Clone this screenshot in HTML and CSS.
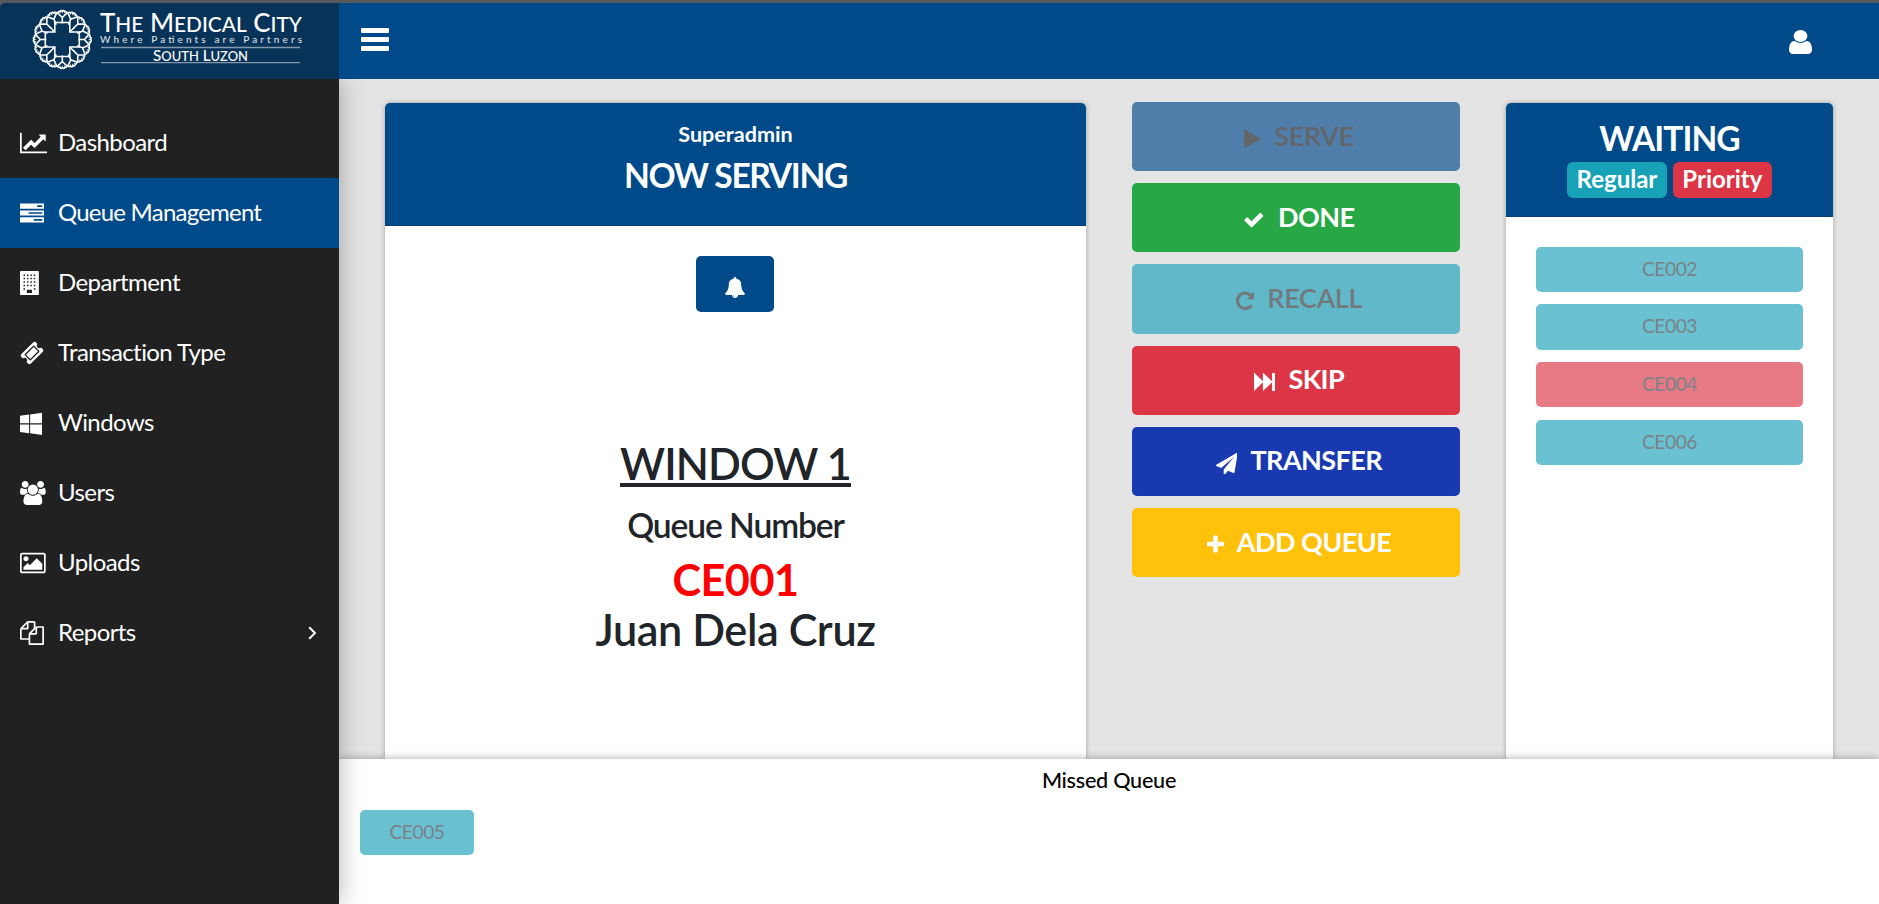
FILE: index.html
```html
<!DOCTYPE html>
<html lang="en">
<head>
<meta charset="utf-8">
<title>Queue Management</title>
<link rel="stylesheet" href="styles.css">
</head>
<body>
<div class="app">
  <header class="topbar">
    <div class="brand">
      <svg class="logo" width="339" height="76" viewBox="0 3 339 76">
        <defs>
          <g id="petal"><path d="M0-16V-22L-4.600-26.300M0-22L4.600-26.300M-5-25.500C-5-27.500-3.500-28.500-2.500-27.500C-2-29.300-.6-29.300 0-28C.6-29.300 2-29.300 2.500-27.500C3.500-28.500 5-27.500 5-25.500"/></g>
        </defs>
        <g transform="translate(62.300 39.500)" fill="none" stroke="#fff" stroke-width="1.600">
          <path d="M-7.500-17H7.500V-7.500H17V7.500H7.500V17H-7.500V7.500H-17V-7.500H-7.500Z"/>
          <path d="M-7.500-7.500L-12-12M7.500-7.500L12-12M7.500 7.500L12 12M-7.500 7.500L-12 12"/>
          <use href="#petal"/><use href="#petal" transform="rotate(22.500)"/><use href="#petal" transform="rotate(45)"/><use href="#petal" transform="rotate(67.500)"/>
          <use href="#petal" transform="rotate(90)"/><use href="#petal" transform="rotate(112.500)"/><use href="#petal" transform="rotate(135)"/><use href="#petal" transform="rotate(157.500)"/>
          <use href="#petal" transform="rotate(180)"/><use href="#petal" transform="rotate(202.500)"/><use href="#petal" transform="rotate(225)"/><use href="#petal" transform="rotate(247.500)"/>
          <use href="#petal" transform="rotate(270)"/><use href="#petal" transform="rotate(292.500)"/><use href="#petal" transform="rotate(315)"/><use href="#petal" transform="rotate(337.500)"/>
        </g>
        <g class="logo-text">
          <text class="logo-name" x="100" y="32" font-size="26" textLength="202" lengthAdjust="spacingAndGlyphs">T<tspan font-size="21">HE</tspan> M<tspan font-size="21">EDICAL</tspan> C<tspan font-size="21">ITY</tspan></text>
          <text class="logo-tag" x="100" y="43" font-size="10" textLength="202">Where Patients are Partners</text>
          <text class="logo-name" x="153" y="60.500" font-size="15" textLength="95" lengthAdjust="spacingAndGlyphs">S<tspan font-size="12.800">OUTH</tspan> L<tspan font-size="12.800">UZON</tspan></text>
        </g>
        <path d="M101 47.500H300M101 62.700H300" stroke="#8499ab" stroke-width="1.300"/>
      </svg>
    </div>
    <div class="topbar-main">
      <svg width="28" height="23" viewBox="0 0 28 23" fill="#fff"><rect width="28" height="5" rx="1"/><rect y="9" width="28" height="5" rx="1"/><rect y="18" width="28" height="5" rx="1"/></svg>
      <svg class="user" width="23" height="24" viewBox="256 128 1280 1536" preserveAspectRatio="none" fill="#fff"><path d="M1536 1399q0 109-62.500 187t-150.500 78h-854q-88 0-150.500-78t-62.500-187q0-85 8.500-160.500t31.500-152 58.500-131 94-89 134.500-34.500q131 128 313 128t313-128q76 0 134.500 34.500t94 89 58.500 131 31.500 152 8.500 160.500zm-256-887q0 159-112.500 271.500t-271.500 112.500-271.500-112.500-112.500-271.500 112.500-271.500 271.500-112.500 271.500 112.500 112.500 271.500z"/></svg>
    </div>
  </header>
  <div class="body">
    <nav class="sidebar">
      <a class="nav-item"><span class="nav-icon"><svg viewBox="0 0 2048 1792"><path d="M2048 1536v128h-2048v-1536h128v1408h1920zm-128-1248v435q0 21-19.500 29.500t-35.500-7.500l-121-121-633 633q-10 10-23 10t-23-10l-233-233-416 416-192-192 585-585q10-10 23-10t23 10l233 233 464-464-121-121q-16-16-7.500-35.500t29.500-19.500h435q14 0 23 9t9 23z"/></svg></span><span class="label">Dashboard</span></a>
      <a class="nav-item active"><span class="nav-icon"><svg viewBox="0 0 1792 1792"><path fill-rule="evenodd" d="M0 192h1792v384h-1792zM1280 320v128h384v-128zM0 704h1792v384h-1792zM640 832v128h1024v-128zM0 1216h1792v384h-1792zM1024 1344v128h640v-128z"/></svg></span><span class="label">Queue Management</span></a>
      <a class="nav-item"><span class="nav-icon"><svg viewBox="0 0 1408 1792"><path d="M64 0h1280q64 0 64 64v1664q0 64-64 64h-1280q-64 0-64-64v-1664q0-64 64-64z"/><path fill="none" stroke="#212121" stroke-width="110" stroke-dasharray="110 146" d="M265 310h900M265 566h900M265 822h900M265 1078h900"/><path fill="#212121" d="M256 1290h120v110h-120zM1034 1290h120v110h-120zM512 1400h384v240h-384z"/></svg></span><span class="label">Department</span></a>
      <a class="nav-item"><span class="nav-icon"><svg viewBox="0 0 1792 1792"><path d="M1024 452l316 316-572 572-316-316zm-211 979l618-618q19-19 19-45t-19-45l-362-362q-18-18-45-18t-45 18l-618 618q-19 19-19 45t19 45l362 362q18 18 45 18t45-18zm889-637l-907 908q-37 37-90.500 37t-90.500-37l-126-126q56-56 56-136t-56-136-136-56-136 56l-125-126q-37-37-37-90.500t37-90.500l907-906q37-37 90.500-37t90.500 37l125 125q-56 56-56 136t56 136 136 56 136-56l126 125q37 37 37 90.500t-37 90.500z"/></svg></span><span class="label">Transaction Type</span></a>
      <a class="nav-item"><span class="nav-icon"><svg viewBox="64 0 1664 1792"><path d="M746 1006v651l-682-94v-557h682zm0-743v659h-682v-565zm982 743v786l-907-125v-661h907zm0-878v794h-907v-669z"/></svg></span><span class="label">Windows</span></a>
      <a class="nav-item"><span class="nav-icon"><svg viewBox="64 0 1920 1792"><path d="M657 896q-162 5-265 128h-134q-82 0-138-40.500t-56-118.500q0-353 124-353 6 0 43.500 21t97.500 42.500 119 21.500q67 0 133-23-5 37-5 66 0 139 81 256zm1071 637q0 120-73 189.500t-194 69.500h-874q-121 0-194-69.500t-73-189.500q0-53 3.500-103.500t14-109 26.500-108.500 43-97.500 62-81 85.500-53.500 111.500-20q10 0 43 21.500t73 48 107 48 135 21.500 135-21.500 107-48 73-48 43-21.500q61 0 111.500 20t85.500 53.500 62 81 43 97.500 26.500 108.500 14 109 3.500 103.500zm-1024-1277q0 106-75 181t-181 75-181-75-75-181 75-181 181-75 181 75 75 181zm704 384q0 159-112.500 271.500t-271.500 112.500-271.500-112.500-112.500-271.500 112.500-271.500 271.500-112.500 271.500 112.500 112.500 271.500zm576 225q0 78-56 118.500t-138 40.500h-134q-103-123-265-128 81-117 81-256 0-29-5-66 66 23 133 23 59 0 119-21.500t97.500-42.500 43.500-21q124 0 124 353zm-128-609q0 106-75 181t-181 75-181-75-75-181 75-181 181-75 181 75 75 181z"/></svg></span><span class="label">Users</span></a>
      <a class="nav-item"><span class="nav-icon"><svg viewBox="-64 0 1920 1792"><path d="M576 576q0 80-56 136t-136 56-136-56-56-136 56-136 136-56 136 56 56 136zm1024 384v448h-1408v-192l320-320 160 160 512-512zm96-704h-1600q-13 0-22.500 9.500t-9.500 22.500v1216q0 13 9.500 22.500t22.500 9.500h1600q13 0 22.500-9.500t9.500-22.500v-1216q0-13-9.500-22.500t-22.500-9.500zm160 32v1216q0 66-47 113t-113 47h-1600q-66 0-113-47t-47-113v-1216q0-66 47-113t113-47h1600q66 0 113 47t47 113z"/></svg></span><span class="label">Uploads</span></a>
      <a class="nav-item"><span class="nav-icon"><svg viewBox="0 0 1792 1792"><path d="M1696 384q40 0 68 28t28 68v1216q0 40-28 68t-68 28h-960q-40 0-68-28t-28-68v-288h-544q-40 0-68-28t-28-68v-672q0-40 20-88t48-76l408-408q28-28 76-48t88-20h416q40 0 68 28t28 68v328q68-40 128-40h416zm-544 213l-299 299h299v-299zm-640-384l-299 299h299v-299zm196 647l316-316v-416h-384v416q0 40-28 68t-68 28h-416v640h512v-256q0-40 20-88t48-76zm956 804v-1152h-384v416q0 40-28 68t-68 28h-416v640h896z"/></svg></span><span class="label">Reports</span><svg class="chevron" width="9" height="14" viewBox="0 0 9 14"><path d="M1.200 1.200L7 7L1.200 12.800" fill="none" stroke="#fff" stroke-width="2"/></svg></a>
    </nav>
    <div class="content">
      <main class="board">
        <section class="card serving">
          <div class="card-head">
            <div class="who">Superadmin</div>
            <div class="title">NOW SERVING</div>
          </div>
          <div class="serving-body">
            <button class="bell"><svg width="20" height="21" viewBox="64 0 1664 1792" preserveAspectRatio="none" fill="#fff"><path d="M912 1696q0-16-16-16-59 0-101.500-42.500t-42.500-101.500q0-16-16-16t-16 16q0 73 51.500 124.500t124.500 51.500q16 0 16-16zm816-288q0 52-38 90t-90 38h-448q0 106-75 181t-181 75-181-75-75-181h-448q-52 0-90-38t-38-90q50-42 91-88t85-119.500 74.500-158.500 50-206 19.500-260q0-152 117-282.500t307-158.500q-8-19-8-39 0-40 28-68t68-28 68 28 28 68q0 20-8 39 190 28 307 158.500t117 282.500q0 139 19.500 260t50 206 74.500 158.500 85 119.500 91 88z"/></svg></button>
            <div class="window-name">WINDOW 1</div>
            <div class="queue-label">Queue Number</div>
            <div class="queue-no">CE001</div>
            <div class="customer">Juan Dela Cruz</div>
          </div>
        </section>
        <section class="actions">
          <button class="act serve off"><svg viewBox="192 0 1408 1792"><path d="M1576 927l-1328 738q-23 13-39.500 3t-16.500-36v-1472q0-26 16.500-36t39.500 3l1328 738q23 13 23 31t-23 31z"/></svg><span>SERVE</span></button>
          <button class="act done"><svg viewBox="0 0 1792 1792"><path d="M1671 566q0 40-28 68l-724 724-136 136q-28 28-68 28t-68-28l-136-136-362-362q-28-28-28-68t28-68l136-136q28-28 68-28t68 28l294 295 656-657q28-28 68-28t68 28l136 136q28 28 28 68z"/></svg><span>DONE</span></button>
          <button class="act recall off"><svg viewBox="128 0 1536 1792"><path d="M1664 256v448q0 26-19 45t-45 19h-448q-42 0-59-40-17-39 14-69l138-138q-148-137-349-137-104 0-198.500 40.500t-163.500 109.500-109.500 163.500-40.500 198.500 40.500 198.500 109.500 163.500 163.500 109.500 198.500 40.500q119 0 225-52t179-147q7-10 23-12 15 0 25 9l137 138q9 8 9.500 20.500t-7.500 22.500q-109 132-264 204.500t-327 72.500q-156 0-298-61t-245-164-164-245-61-298 61-298 164-245 245-164 298-61q147 0 284.500 55.500t244.500 156.500l130-129q29-31 70-14 39 17 39 59z"/></svg><span>RECALL</span></button>
          <button class="act skip"><svg viewBox="0 0 1792 1792"><path d="M0 130L740 850V130L1500 850V160h280v1500h-280V942L740 1660V942L0 1660Z"/></svg><span>SKIP</span></button>
          <button class="act transfer"><svg viewBox="0 0 1792 1792"><path d="M1764 11q33 24 27 64l-256 1536q-5 29-32 45-14 8-31 8-11 0-24-5l-453-185-242 295q-18 23-49 23-13 0-22-4-19-7-30.500-23.500t-11.500-36.500v-349l864-1059-1069 925-395-162q-37-14-40-55-2-40 32-59l1664-960q15-9 32-9 20 0 36 11z"/></svg><span>TRANSFER</span></button>
          <button class="act add"><svg viewBox="192 0 1408 1792"><path d="M1600 736v192q0 40-28 68t-68 28h-416v416q0 40-28 68t-68 28h-192q-40 0-68-28t-28-68v-416h-416q-40 0-68-28t-28-68v-192q0-40 28-68t68-28h416v-416q0-40 28-68t68-28h192q40 0 68 28t28 68v416h416q40 0 68 28t28 68z"/></svg><span>ADD QUEUE</span></button>
        </section>
        <section class="card waiting">
          <div class="card-head">
            <div class="title">WAITING</div>
            <div class="badges"><span class="badge regular">Regular</span><span class="badge priority">Priority</span></div>
          </div>
          <div class="waiting-list">
            <div class="ticket">CE002</div>
            <div class="ticket">CE003</div>
            <div class="ticket urgent">CE004</div>
            <div class="ticket">CE006</div>
          </div>
        </section>
      </main>
      <footer class="missed">
        <div class="missed-title">Missed Queue</div>
        <div class="missed-list"><div class="ticket">CE005</div></div>
      </footer>
    </div>
  </div>
</div>
</body>
</html>
```
FILE: styles.css
```css
* { box-sizing: border-box; }
body { margin: 0; font-family: Lato, sans-serif; color: #212529; background: #58595b; }
button { border: 0; font-family: inherit; }
svg { display: block; flex: none; }

.app { display: flex; flex-direction: column; width: 1879px; height: 904px; padding-top: 3px; overflow: hidden; }
.topbar { position: relative; z-index: 3; display: flex; height: 76px; flex: none; }
.brand { width: 339px; background: #083358; border-top-left-radius: 5px; }
.logo-text { fill: #fff; font-family: Lato, sans-serif; }
.logo-name { font-weight: 500; }
.logo-tag { font-weight: 500; opacity: .85; }
.topbar-main { flex: 1; display: flex; justify-content: space-between; align-items: flex-start; padding: 25px 67px 0 22px; background: #004a89; }
.user { margin-top: 2px; }

.body { flex: 1; display: flex; min-height: 0; }
.sidebar { width: 339px; flex: none; padding-top: 29px; background: #212121; box-shadow: 0 0 24px rgba(0, 0, 0, .3); z-index: 2; }
.nav-item { display: flex; align-items: center; height: 70px; padding: 0 22px 0 20px; color: #fff; font-size: 24px; line-height: 36px; white-space: nowrap; }
.nav-item.active { background: #004a89; }
.label { margin-top: -3px; letter-spacing: -.58px; }
.active .label { letter-spacing: -.78px; }
.nav-icon { width: 38px; flex: none; }
.nav-icon svg { height: 24px; fill: #fff; }
.chevron { margin-left: auto; }

.content { flex: 1; display: flex; flex-direction: column; background: #e4e4e4; }
.board { flex: 1; display: flex; gap: 46px; padding: 23px 46px 0; min-height: 0; }
.card { margin-top: 1px; background: #fff; border-radius: 5px 5px 0 0; box-shadow: 0 0 5px rgba(0, 0, 0, .3); text-align: center; }
.card-head { background: #004a89; color: #fff; border-bottom: 1px solid #063f76; border-radius: 5px 5px 0 0; font-weight: 700; }
.serving { width: 701px; flex: none; }
.serving .card-head { height: 123px; padding-top: 18px; }
.who { font-size: 21.600px; line-height: 26px; }
.title { font-size: 33.600px; line-height: 40px; letter-spacing: -1px; }
.serving .title { margin-top: 8px; letter-spacing: -1.350px; }
.serving-body { display: flex; flex-direction: column; align-items: center; padding-top: 30px; font-weight: 600; white-space: nowrap; }
.bell { display: flex; justify-content: center; width: 78px; height: 56px; margin-right: 1px; padding: 21px 0 0; background: #004a89; border-radius: 5px; }
.window-name { margin-top: 125px; font-size: 43.200px; line-height: 52px; letter-spacing: -.9px; text-decoration: underline; }
.queue-label { margin-top: 15.500px; font-size: 33.600px; line-height: 40px; letter-spacing: -1.100px; }
.queue-no { margin-top: 8px; color: #f00; font-size: 43.200px; line-height: 52px; font-weight: 700; letter-spacing: -.5px; }
.customer { font-size: 43.200px; line-height: 49px; letter-spacing: -.4px; }

.actions { width: 328px; flex: none; display: flex; flex-direction: column; gap: 12px; }
.act { display: flex; justify-content: center; align-items: center; gap: 13px; height: 69.200px; flex: none; padding: 0 0 0 6px; color: #fff; font-size: 27px; line-height: 40px; font-weight: 700; letter-spacing: -.55px; border-radius: 5px; white-space: nowrap; }
.act span { margin-top: -2px; }
.act svg { height: 21.600px; margin-top: 4px; fill: currentColor; }
.off { color: #626569; font-weight: 600; letter-spacing: -.3px; }
.serve { background: #507eaa; }
.done { background: #28a745; }
.recall { background: #60b8c9; color: #74797e; }
.skip { background: #dc3545; }
.transfer { background: #1939b0; }
.add { background: #ffc10a; }

.waiting { width: 327px; flex: none; }
.waiting .card-head { height: 114px; padding-top: 15px; }
.badges { display: flex; justify-content: center; gap: 6px; margin-top: 4px; }
.badge { height: 36px; padding: 0 9.500px; border-radius: 6px; font-size: 24px; line-height: 33px; }
.regular { background: #17a2b8; }
.priority { background: #dc3545; }
.waiting-list { display: flex; flex-direction: column; gap: 12.300px; padding: 29.800px 30px; }
.ticket { height: 45.300px; background: #69c1d1; color: #7a8288; border-radius: 5px; font-size: 19.200px; line-height: 43px; letter-spacing: -.45px; text-align: center; }
.ticket.urgent { background: #e77a85; }

.missed { height: 145px; flex: none; padding: 7px 21px 0; background: #fff; box-shadow: 0 0 8px rgba(0, 0, 0, .35); z-index: 1; }
.missed-title { color: #000; font-size: 21.600px; line-height: 28px; letter-spacing: -.25px; text-align: center; font-weight: 500; }
.missed-list { display: flex; margin-top: 16px; }
.missed-list .ticket { width: 114px; }
```
